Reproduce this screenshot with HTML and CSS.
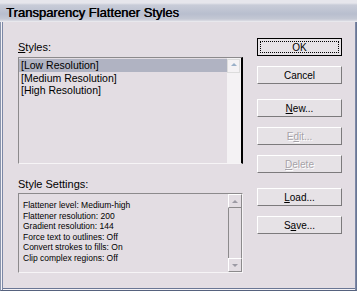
FILE: index.html
```html
<!DOCTYPE html>
<html lang="en">
<head>
    <meta charset="UTF-8">
    <title>Transparency Flattener Styles</title>
    <link rel="stylesheet" href="styles.css">
</head>
<body>
    <div class="window">
        <div class="titlebar">Transparency Flattener Styles</div>
        <div class="client">
            <div class="left">
                <div class="label"><u>S</u>tyles:</div>
                <div class="listbox">
                    <div class="rows">
                        <div class="row selected">[Low Resolution]</div>
                        <div class="row">[Medium Resolution]</div>
                        <div class="row">[High Resolution]</div>
                    </div>
                    <div class="scroll light">
                        <div class="arrow up"></div>
                    </div>
                </div>

                <div class="label settings-label">Style Settings:</div>
                <div class="settings">
                    <div class="lines">
                        <div>Flattener level: Medium-high</div>
                        <div>Flattener resolution: 200</div>
                        <div>Gradient resolution: 144</div>
                        <div>Force text to outlines: Off</div>
                        <div>Convert strokes to fills: On</div>
                        <div>Clip complex regions: Off</div>
                    </div>
                    <div class="scroll">
                        <div class="arrow-btn"><span class="tri up"></span></div>
                        <div class="track"></div>
                        <div class="arrow-btn"><span class="tri down"></span></div>
                    </div>
                </div>
            </div>

            <div class="buttons">
                <button class="btn default"><span class="focus">OK</span></button>
                <button class="btn">Cancel</button>
                <button class="btn gap"><u>N</u>ew...</button>
                <button class="btn disabled">E<u>d</u>it...</button>
                <button class="btn disabled"><u>D</u>elete</button>
                <button class="btn gap"><u>L</u>oad...</button>
                <button class="btn">S<u>a</u>ve...</button>
            </div>
        </div>
    </div>
</body>
</html>
```

FILE: styles.css
```css
body {
    margin: 0;
    background-color: #e3dde3;
    font-family: "Liberation Sans", Arial, sans-serif;
}
.window {
    width: 357px;
    height: 291px;
    box-sizing: border-box;
    border-left: 1px solid #8a94ac;
    border-right: 1px solid #6a7694;
    border-bottom: 1px solid #56627e;
    box-shadow: inset 1px 0 0 #f4f2f6, inset 2px 0 0 #7c88a6, inset -1px 0 0 #7c88a6, inset 0 -1px 0 #f4f2f6, inset 0 -2px 0 #6a7694;
    display: flex;
    flex-direction: column;
}
.titlebar {
    height: 22px;
    box-sizing: border-box;
    padding: 5px 0 0 6px;
    font-size: 13px;
    line-height: 15px;
    color: #000;
    text-shadow: 0.4px 0 0 #000;
    background: linear-gradient(#e6e6ec 0, #e6e6ec 3px, #c8ccd8 5px, #b8bece 14px, #c4c8d4 19px, #dcdce4 21px, #f4f4f6 22px);
    margin-left: -1px;
    margin-right: -1px;
}
.client {
    flex: 1;
    display: flex;
    padding: 16px 0 0 17px;
}
.left {
    width: 225px;
}
.label {
    font-size: 11px;
    height: 19px;
    line-height: 11px;
    padding-top: 4px;
    box-sizing: border-box;
    color: #000;
}
.settings-label {
    height: 29px;
    padding-top: 15px;
}
.listbox,
.settings {
    display: flex;
    box-sizing: border-box;
    border: 1px solid #8c8a8c;
    border-right-color: #f6f4f6;
    border-bottom-color: #f6f4f6;
}
.listbox {
    height: 107px;
    border-right: 2px solid #000;
}
.settings {
    height: 80px;
}
.rows {
    flex: 1;
    padding-top: 1px;
}
.row {
    font-size: 10.5px;
    height: 12px;
    line-height: 12px;
    padding-left: 2px;
}
.row.selected {
    background-color: #b0b3c2;
    height: 13px;
}
.lines {
    flex: 1;
    padding: 6px 0 0 4px;
    font-size: 8.5px;
    line-height: 10.6px;
    color: #000;
}
.scroll {
    width: 14px;
    display: flex;
    flex-direction: column;
}
.scroll.light {
    background-color: #f4f2f4;
}
.arrow {
    height: 12px;
    margin: 1px 1px 0 0;
    border: 1px solid #dcdcdc;
    position: relative;
}
.arrow.up::after {
    content: "";
    position: absolute;
    left: 3px;
    top: 3px;
    border: 3px solid transparent;
    border-bottom: 3px solid #9ab0c8;
    border-top: none;
}
.arrow-btn {
    height: 14px;
    box-sizing: border-box;
    border: 1px solid #8c8a8c;
    border-top-color: #fff;
    border-left-color: #fff;
    display: flex;
    align-items: center;
    justify-content: center;
}
.track {
    flex: 1;
    border-left: 1px solid #8c8a8c;
    border-right: 1px solid #8c8a8c;
}
.tri {
    width: 0;
    height: 0;
    border-left: 3px solid transparent;
    border-right: 3px solid transparent;
}
.tri.up {
    border-bottom: 3px solid #9c9aa4;
}
.tri.down {
    border-top: 3px solid #9c9aa4;
}
.buttons {
    display: flex;
    flex-direction: column;
    margin-left: 14px;
    gap: 10px;
}
.btn {
    width: 85px;
    height: 18px;
    box-sizing: border-box;
    padding: 0;
    font-family: "Liberation Sans", Arial, sans-serif;
    font-size: 10px;
    color: #000;
    background-color: #e6e2e6;
    border: 1px solid #7c7a7c;
    border-top-color: #fff;
    border-left-color: #fff;
}
.btn.default {
    border: 1px solid #000;
    padding: 2px;
}
.focus {
    display: block;
    height: 100%;
    border: 1px dotted #000;
    box-sizing: border-box;
    line-height: 12px;
}
.btn.gap {
    margin-top: 5px;
}
.btn.disabled {
    color: #a6a2a8;
    text-shadow: 1px 1px 0 #fff;
}
```
